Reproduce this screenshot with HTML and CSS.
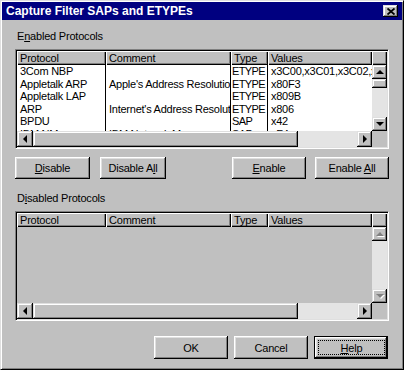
FILE: index.html
```html
<!DOCTYPE html>
<html>
<head>
<meta charset="utf-8">
<link rel="stylesheet" href="styles.css">
</head>
<body>
<div class="window">
  <div class="titlebar">
    <span class="title">Capture Filter SAPs and ETYPEs</span>
    <div class="close bevel"><svg width="8" height="7" viewBox="0 0 8 7"><path d="M0.5 0.5L7.5 6.5M7.5 0.5L0.5 6.5" stroke="#000" stroke-width="1.8"/></svg></div>
  </div>
  <div class="content">
    <div class="label">E<u>n</u>abled Protocols</div>
    <div class="list">
      <div class="list-main">
        <div class="cols hdr"><span>Protocol</span><span>Comment</span><span>Type</span><span>Values</span></div>
        <div class="rows">
          <div class="cols row"><span>3Com NBP</span><span></span><span>ETYPE</span><span>x3C00,x3C01,x3C02,x3C03</span></div>
          <div class="cols row"><span>Appletalk ARP</span><span>Apple's Address Resolution Protocol</span><span>ETYPE</span><span>x80F3</span></div>
          <div class="cols row"><span>Appletalk LAP</span><span></span><span>ETYPE</span><span>x809B</span></div>
          <div class="cols row"><span>ARP</span><span>Internet's Address Resolution Protocol</span><span>ETYPE</span><span>x806</span></div>
          <div class="cols row"><span>BPDU</span><span></span><span>SAP</span><span>x42</span></div>
          <div class="cols row"><span>IBM NM</span><span>IBM Network Management</span><span>SAP</span><span>xF4</span></div>
        </div>
      </div>
      <div class="vscroll">
        <div class="vhdr hcell"></div>
        <div class="arrow bevel up"></div>
        <div class="vthumb bevel"></div>
        <div class="track"></div>
        <div class="arrow bevel down"></div>
      </div>
      <div class="hscroll">
        <div class="harrow bevel left"></div>
        <div class="hthumb bevel"></div>
        <div class="track"></div>
        <div class="harrow bevel right"></div>
      </div>
      <div class="corner"></div>
    </div>

    <div class="btnrow">
      <div class="group">
        <button class="btn w75"><span><u>D</u>isable</span></button>
        <button class="btn w66"><span>Disable A<u>l</u>l</span></button>
      </div>
      <div class="group">
        <button class="btn w74"><span><u>E</u>nable</span></button>
        <button class="btn w74"><span>Enable <u>A</u>ll</span></button>
      </div>
    </div>

    <div class="label label2">D<u>i</u>sabled Protocols</div>
    <div class="list list2">
      <div class="list-main">
        <div class="cols hdr"><span>Protocol</span><span>Comment</span><span>Type</span><span>Values</span></div>
        <div class="rows rows-empty"></div>
      </div>
      <div class="vscroll">
        <div class="vhdr hcell"></div>
        <div class="arrow bevel up off"></div>
        <div class="track"></div>
        <div class="arrow bevel down off"></div>
      </div>
      <div class="hscroll">
        <div class="harrow bevel left"></div>
        <div class="hthumb bevel"></div>
        <div class="track"></div>
        <div class="harrow bevel right"></div>
      </div>
      <div class="corner"></div>
    </div>

    <div class="footer">
      <button class="btn w74"><span>OK</span></button>
      <button class="btn w74"><span>Cancel</span></button>
      <button class="btn w74 default"><span class="focus"><span><u>H</u>elp</span></span></button>
    </div>
  </div>
</div>
</body>
</html>
```
FILE: styles.css
```css
* { box-sizing: border-box; }
html, body { margin: 0; padding: 0; background: #c0c0c0; }
body {
  font-family: "Liberation Sans", Arial, sans-serif;
  font-size: 11px;
  color: #000;
  width: 404px;
  height: 370px;
  overflow: hidden;
}
.window {
  width: 404px;
  height: 370px;
  background: #c0c0c0;
  border: 1px solid;
  border-color: #dfdfdf #000 #000 #dfdfdf;
  box-shadow: inset 1px 1px #fff, inset -1px -1px #808080;
  padding: 1px;
  display: flex;
  flex-direction: column;
}
.titlebar {
  height: 18px;
  flex: none;
  background: #000080;
  color: #fff;
  display: flex;
  align-items: center;
  justify-content: space-between;
  padding: 0 4px 0 4px;
}
.title { font-weight: bold; font-size: 12px; white-space: nowrap; }
.close {
  width: 15px;
  height: 12px;
  display: flex;
  align-items: center;
  justify-content: center;
}
.bevel {
  background: #c0c0c0;
  box-shadow: inset -1px -1px #000, inset 1px 1px #dfdfdf, inset -2px -2px #808080, inset 2px 2px #fff;
}
.content {
  padding: 10px 13px 0 13px;
  display: flex;
  flex-direction: column;
}
.label { height: 13px; line-height: 13px; padding-left: 2px; white-space: nowrap; letter-spacing: -0.2px; }
.label2 { margin-top: 13px; }
.list {
  margin-top: 6px;
  width: 374px;
  height: 100px;
  border: 1px solid;
  border-color: #808080 #fff #fff #808080;
  box-shadow: inset 1px 1px #000, inset -1px -1px #dfdfdf;
  padding: 1px;
  display: grid;
  grid-template-columns: 355px 15px;
  grid-template-rows: 80px 16px;
}
.list2 { height: 110px; grid-template-rows: 90px 16px; }
.list-main { display: flex; flex-direction: column; overflow: hidden; background: #fff; }
.list2 .list-main { background: #c0c0c0; }
.cols {
  display: grid;
  grid-template-columns: 89px 125px 37px 104px;
}
.cols span { overflow: hidden; white-space: nowrap; }
.hdr { height: 14px; flex: none; }
.hdr span, .hcell {
  background: #c0c0c0;
  box-shadow: inset 1px 1px #fff, inset -1px -1px #000, inset -2px -2px #808080;
  line-height: 14px;
  padding-left: 3px;
  letter-spacing: -0.2px;
}
.rows { flex: 1; overflow: hidden; }
.row { height: 12.5px; line-height: 12.5px; letter-spacing: -0.25px; }
.row span { padding-left: 3px; }
.row span:nth-child(-n+3) { border-right: 1px solid #000; }
.row span:nth-child(3) { padding-left: 1px; letter-spacing: -0.6px; }
.row span:nth-child(4) { padding-left: 3px; }
.vscroll { display: flex; flex-direction: column; }
.vhdr { height: 14px; flex: none; }
.arrow { height: 14px; flex: none; display: flex; align-items: center; justify-content: center; }
.vthumb { height: 9px; flex: none; }
.track { flex: 1; background: #e4e4e4; }
.hscroll { display: flex; }
.harrow { width: 15px; flex: none; display: flex; align-items: center; justify-content: center; }
.harrow.left { width: 16px; }
.hthumb { width: 265px; flex: none; }
.corner { background: #c0c0c0; }
.up::before, .down::before, .left::before, .right::before { content: ""; width: 0; height: 0; }
.up::before { border-left: 4px solid transparent; border-right: 4px solid transparent; border-bottom: 4px solid #000; }
.down::before { border-left: 4px solid transparent; border-right: 4px solid transparent; border-top: 4px solid #000; }
.left::before { border-top: 4px solid transparent; border-bottom: 4px solid transparent; border-right: 4px solid #000; }
.right::before { border-top: 4px solid transparent; border-bottom: 4px solid transparent; border-left: 4px solid #000; }
.off.up::before { border-bottom-color: #808080; filter: drop-shadow(1px 1px 0 #fff); }
.off.down::before { border-top-color: #808080; filter: drop-shadow(1px 1px 0 #fff); }
.btn {
  appearance: none;
  border: none;
  margin: 0;
  padding: 0;
  font: inherit;
  color: #000;
  height: 22px;
  background: #c0c0c0;
  box-shadow: inset -1px -1px #000, inset 1px 1px #fff, inset -2px -2px #808080, inset 2px 2px #dfdfdf;
  display: flex;
  align-items: center;
  justify-content: center;
  white-space: nowrap;
  letter-spacing: -0.2px;
}
.w75 { width: 75px; }
.w74 { width: 74px; }
.w66 { width: 66px; }
.btnrow {
  margin-top: 8px;
  display: flex;
  justify-content: space-between;
}
.group { display: flex; gap: 10px; }
.group + .group { gap: 9px; }
.footer {
  margin-top: 15px;
  display: flex;
  justify-content: flex-end;
  gap: 6px;
  padding-right: 1px;
}
.footer .btn { height: 23px; }
.btn.default {
  padding: 4px 3px 4px 4px;
  box-shadow: inset 0 0 0 1px #000, inset -2px -2px #000, inset 2px 2px #fff, inset -3px -3px #808080, inset 3px 3px #dfdfdf;
}
.focus {
  width: 100%;
  height: 100%;
  border: 1px dotted #000;
  display: flex;
  align-items: center;
  justify-content: center;
}
```
